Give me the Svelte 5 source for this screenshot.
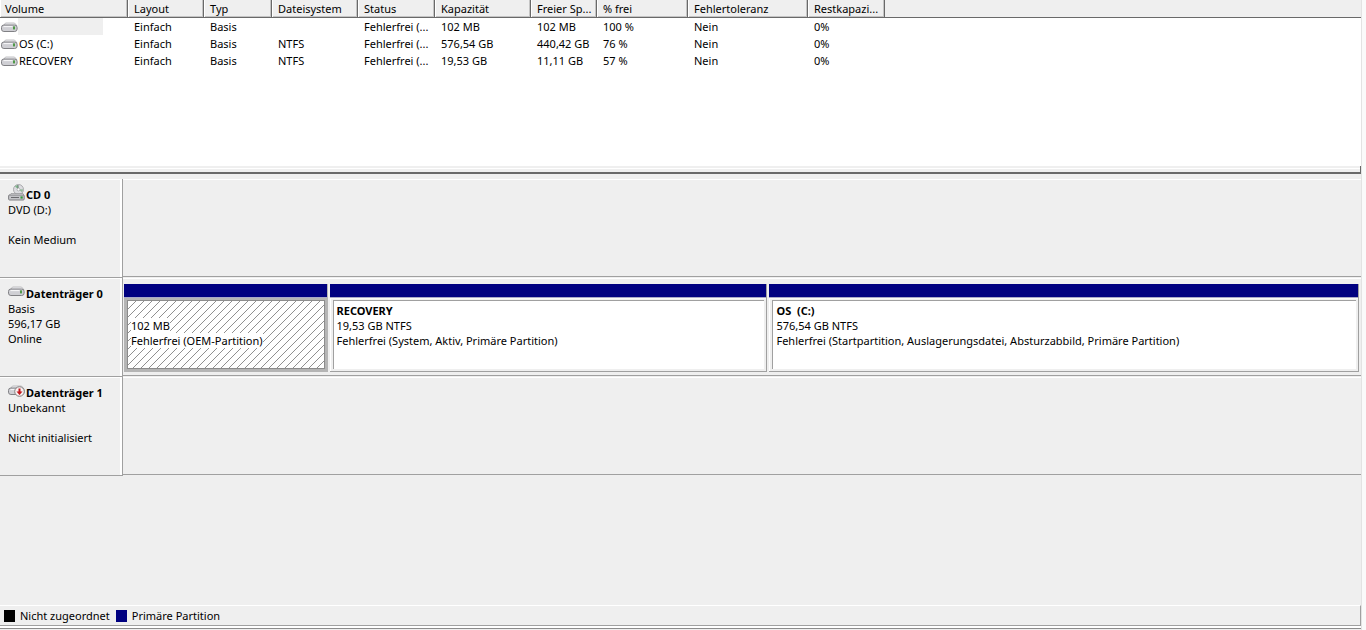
<script lang="ts">
    interface Partition {
        name: string;
        size: string;
        status: string;
        share: number;
        selected?: boolean;
    }

    interface Disk {
        icon: string;
        title: string;
        lines: string[];
        partitions: Partition[];
    }

    const columns = [
        { label: 'Volume', width: 128 },
        { label: 'Layout', width: 76 },
        { label: 'Typ', width: 68 },
        { label: 'Dateisystem', width: 86 },
        { label: 'Status', width: 77 },
        { label: 'Kapazität', width: 96 },
        { label: 'Freier Sp...', width: 66 },
        { label: '% frei', width: 91 },
        { label: 'Fehlertoleranz', width: 120 },
        { label: 'Restkapazi...', width: 77 }
    ];

    const volumes = [
        { name: '', cells: ['Einfach', 'Basis', '', 'Fehlerfrei (...', '102 MB', '102 MB', '100 %', 'Nein', '0%'] },
        { name: 'OS (C:)', cells: ['Einfach', 'Basis', 'NTFS', 'Fehlerfrei (...', '576,54 GB', '440,42 GB', '76 %', 'Nein', '0%'] },
        { name: 'RECOVERY', cells: ['Einfach', 'Basis', 'NTFS', 'Fehlerfrei (...', '19,53 GB', '11,11 GB', '57 %', 'Nein', '0%'] }
    ];

    const disks: Disk[] = [
        { icon: 'cd', title: 'CD 0', lines: ['DVD (D:)', '', 'Kein Medium'], partitions: [] },
        {
            icon: 'disk',
            title: 'Datenträger 0',
            lines: ['Basis', '596,17 GB', 'Online'],
            partitions: [
                { name: '', size: '102 MB', status: 'Fehlerfrei (OEM-Partition)', share: 203, selected: true },
                { name: 'RECOVERY', size: '19,53 GB NTFS', status: 'Fehlerfrei (System, Aktiv, Primäre Partition)', share: 438 },
                { name: 'OS  (C:)', size: '576,54 GB NTFS', status: 'Fehlerfrei (Startpartition, Auslagerungsdatei, Absturzabbild, Primäre Partition)', share: 590 }
            ]
        },
        { icon: 'down', title: 'Datenträger 1', lines: ['Unbekannt', '', 'Nicht initialisiert'], partitions: [] }
    ];

    let selected = $state('');
</script>

{#snippet drive()}
    <path d="M2.5 5.5 4.5 3h9l2.3 2.5z" fill="#f1f1f3" stroke="#b0b0b4" stroke-width=".8"/>
    <rect x=".5" y="5" width="15.6" height="6.5" rx="2.4" fill="#cfcfd4" stroke="#808084"/>
    <path d="M2.5 6.6h9" stroke="#f8f8fa"/>
    <rect x="12" y="6.4" width="2" height="3" fill="#4f9a48"/>
{/snippet}

<main>
    <div class="list">
        <table>
            <colgroup>
                {#each columns as col}
                    <col style:width={`${col.width}px`} />
                {/each}
                <col />
            </colgroup>
            <thead>
                <tr>
                    {#each columns as col}
                        <th scope="col">{col.label}</th>
                    {/each}
                    <td class="filler"></td>
                </tr>
            </thead>
            <tbody>
                {#each volumes as vol}
                    <tr onclick={() => (selected = vol.name)}>
                        <td class="volume">
                            <div class="vol">
                                <svg class="icon" viewBox="0 0 17 14" aria-hidden="true">{@render drive()}</svg>
                                <span class="vol-name" class:active={vol.name === selected}>{vol.name}</span>
                            </div>
                        </td>
                        {#each vol.cells as cell}
                            <td>{cell}</td>
                        {/each}
                        <td></td>
                    </tr>
                {/each}
            </tbody>
        </table>
    </div>

    <div class="splitter"></div>

    <div class="disks">
        {#each disks as disk}
            <section class="disk">
                <div class="info">
                    <h2>
                        <svg class="icon big" viewBox="0 0 17 18" aria-hidden="true">
                            {#if disk.icon === 'cd'}
                                <circle cx="10.5" cy="5.5" r="5" fill="#dcdce0" stroke="#9a9a9e" stroke-width=".8"/>
                                <path d="M10.5 5.5 7 2.5a5 5 0 0 1 3-1.6z" fill="#7fb98a"/>
                                <path d="M10.5 5.5l3.6 2.8a5 5 0 0 0 .9-3z" fill="#93b99a"/>
                                <path d="M10 1v4" stroke="#6f7f76"/>
                                <circle cx="10.5" cy="5.5" r="1.4" fill="#fff" stroke="#909094" stroke-width=".6"/>
                                <path d="M3 9.5h12l1 2H1z" fill="#ededf0" stroke="#8d8d90" stroke-width=".7"/>
                                <rect x=".6" y="11" width="15.6" height="5" rx="1" fill="#c4c4c8" stroke="#808084"/>
                                <path d="M3 13.5h8" stroke="#6a6a6e"/>
                                <rect x="12.5" y="12.4" width="2.2" height="2.2" fill="#2f9a3a"/>
                            {:else}
                                <g transform="translate(0 1)">{@render drive()}</g>
                            {/if}
                            {#if disk.icon === 'down'}
                                <circle cx="11.5" cy="9.5" r="4.8" fill="#f7f0f0" stroke="#85807f"/>
                                <path d="M10.5 6.5h2v3h2l-3 3.5-3-3.5h2z" fill="#c4161c"/>
                            {/if}
                        </svg>
                        {disk.title}
                    </h2>
                    {#each disk.lines as line}
                        <p>{line}</p>
                    {/each}
                </div>
                <div class="volumes">
                    {#each disk.partitions as part}
                        <button class="partition" class:selected={part.selected} style:flex-grow={part.share}>
                            <span class="bar"></span>
                            <span class="frame">
                                <span class="body">
                                    <b>{part.name}</b>
                                    <span>{part.size}</span>
                                    <span>{part.status}</span>
                                </span>
                            </span>
                        </button>
                    {/each}
                </div>
            </section>
        {/each}
    </div>

    <footer>
        <span class="swatch"></span>Nicht zugeordnet
        <span class="swatch primary"></span>Primäre Partition
    </footer>
</main>

<style>
    :global(body) {
        background: #fafafa;
    }

    main {
        box-sizing: border-box;
        display: flex;
        flex-direction: column;
        min-height: 100vh;
        margin-right: 4px;
        border-right: 1px solid #e3e3e3;
        background: #efefef;
        color: #000;
        font: 11px/15px "Segoe UI", "Noto Sans", sans-serif;
    }

    /* Volume list */
    .list {
        height: 166px;
        background: #fff;
    }
    table {
        width: 100%;
        table-layout: fixed;
        border-collapse: separate;
        border-spacing: 0;
    }
    th, td {
        box-sizing: border-box;
        height: 17px;
        padding: 0 0 0 6px;
        line-height: 17px;
        font-weight: 400;
        text-align: left;
        white-space: nowrap;
        overflow: hidden;
    }
    th, .filler {
        height: 18px;
        background: #efefef;
        border-bottom: 1px solid #696969;
    }
    th {
        border-right: 1px solid #696969;
        box-shadow: inset 1px 0 #fff, inset -1px -1px #c4c4c4;
    }
    th:first-child {
        padding-left: 5px;
    }
    .volume {
        padding: 0 0 0 1px;
    }
    .vol {
        display: flex;
        align-items: center;
        height: 17px;
    }
    .vol-name {
        height: 17px;
        padding: 0 1px;
    }
    .vol-name.active {
        width: 83px;
        background: #efefef;
    }
    .icon {
        width: 17px;
        height: 14px;
        flex: none;
    }

    .splitter {
        height: 8px;
        box-sizing: border-box;
        border-right: 1px solid #696969;
        border-bottom: 2px solid #696969;
        background: linear-gradient(#efefef 2px, #fff 2px, #fff 3px, #efefef 3px);
    }

    /* Disk rows */
    .disks {
        flex: 1;
        padding-top: 5px;
    }
    .disk {
        display: flex;
        height: 99px;
    }
    .info {
        box-sizing: border-box;
        width: 123px;
        flex: none;
        padding: 8px 0 0 8px;
        border-bottom: 1px solid #a0a0a0;
        border-right: 1px solid #a0a0a0;
        box-shadow: inset 0 1px #fff, inset -2px 0 #fff;
        white-space: nowrap;
    }
    h2 {
        display: flex;
        align-items: center;
        height: 15px;
        margin: 0;
        font-size: 11px;
    }
    .big {
        height: 18px;
        margin: -4px 1px 0 0;
    }
    p {
        height: 15px;
        margin: 0;
    }
    .volumes {
        box-sizing: border-box;
        display: flex;
        flex: 1;
        gap: 2px;
        padding: 6px 2px 3px 1px;
        margin-bottom: 1px;
        border-bottom: 1px solid #a0a0a0;
        box-shadow: inset 0 1px #fff;
    }
    .partition {
        display: flex;
        flex-direction: column;
        flex-basis: 0;
        min-width: 0;
        padding: 0;
        border: 0;
        border-right: 1px solid #a0a0a0;
        border-bottom: 1px solid #a0a0a0;
        background: #efefef;
        color: inherit;
        font: inherit;
        text-align: left;
    }
    .bar {
        flex: none;
        height: 13px;
        background: #000080;
        border-bottom: 1px solid #a8a8c8;
    }
    .frame {
        display: flex;
        flex: 1;
        padding: 1px 2px 2px 2px;
        border-top: 1px solid #f8f8f8;
        border-left: 1px solid #fff;
    }
    .body {
        flex: 1;
        padding: 2px 3px;
        border-top: 1px solid #a0a0a0;
        border-left: 1px solid #a0a0a0;
        background-color: #fff;
        overflow: hidden;
    }
    .body > * {
        display: block;
        width: fit-content;
        height: 15px;
        background: #fff;
        white-space: pre;
    }
    .selected {
        border-right-color: #b5b5b5;
        border-bottom-color: #b5b5b5;
    }
    .selected .frame {
        border-color: #b5b5b5;
        background: #b5b5b5;
    }
    /* Hatching repeats every 8px */
    .selected .body {
        border: 1px solid #8c8c8c;
        background-image: linear-gradient(135deg, transparent 46%, #909090 46%, #909090 54%, transparent 54%);
        background-size: 8px 8px;
    }

    footer {
        display: flex;
        align-items: center;
        height: 19px;
        margin-bottom: 4px;
        padding-left: 4px;
        border-top: 1px solid #fff;
        border-right: 1px solid #a0a0a0;
        border-bottom: 1px solid #a0a0a0;
        box-shadow: 0 1px #fff, 0 2px #fff, 0 3px #8c8c8c;
    }
    .swatch {
        width: 11px;
        height: 12px;
        margin-right: 5px;
        background: #000;
    }
    .primary {
        margin-left: 6px;
        background: #000080;
    }
</style>
